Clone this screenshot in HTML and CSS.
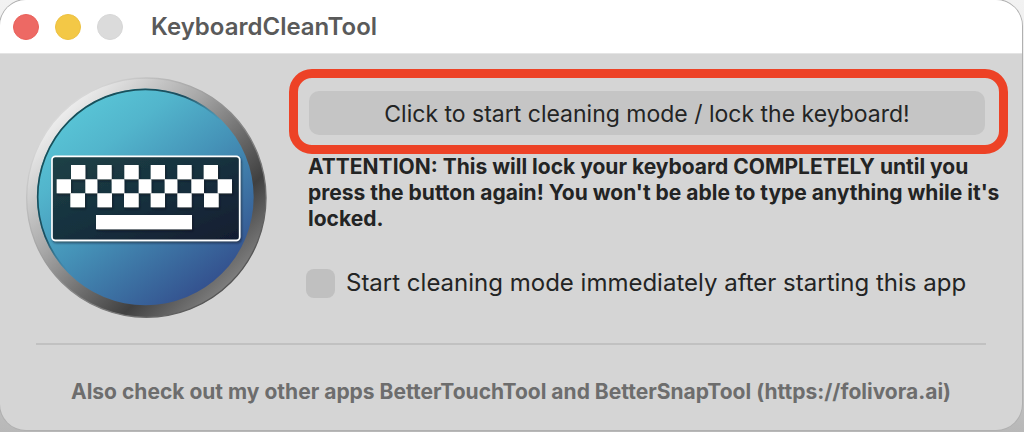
FILE: index.html
```html
<!DOCTYPE html>
<html lang="en">
<head>
<meta charset="utf-8">
<title>KeyboardCleanTool</title>
<link rel="stylesheet" href="styles.css">
</head>
<body>
<main class="window">
  <header class="titlebar">
    <div class="lights">
      <button class="light light-close" type="button" aria-label="Close"></button>
      <button class="light light-minimize" type="button" aria-label="Minimize"></button>
      <button class="light light-zoom" type="button" aria-label="Zoom" disabled></button>
    </div>
    <h1 class="title">KeyboardCleanTool</h1>
  </header>
  <div class="content">
    <svg class="logo" viewBox="33 35 723 723" aria-hidden="true">
      <defs>
        <linearGradient id="rim" x1="0.15" y1="0.15" x2="0.85" y2="0.85">
          <stop offset="0" stop-color="#ececec"/>
          <stop offset="0.12" stop-color="#d4d4d4"/>
          <stop offset="0.35" stop-color="#a8a8a8"/>
          <stop offset="0.6" stop-color="#6a6a6a"/>
          <stop offset="0.78" stop-color="#404040"/>
          <stop offset="1" stop-color="#7c7c7c"/>
        </linearGradient>
        <linearGradient id="edge" x1="0.15" y1="0.15" x2="0.85" y2="0.85">
          <stop offset="0" stop-color="#d8d8d8"/>
          <stop offset="0.5" stop-color="#8a8a8a"/>
          <stop offset="0.75" stop-color="#777"/>
          <stop offset="1" stop-color="#555"/>
        </linearGradient>
        <linearGradient id="face" x1="0.2" y1="0.1" x2="0.8" y2="0.9">
          <stop offset="0" stop-color="#58c3d5"/>
          <stop offset="0.2" stop-color="#52b5cc"/>
          <stop offset="0.5" stop-color="#4593b8"/>
          <stop offset="1" stop-color="#34528f"/>
        </linearGradient>
        <linearGradient id="lip" x1="0.15" y1="0.15" x2="0.85" y2="0.85">
          <stop offset="0" stop-color="#17505a"/>
          <stop offset="0.3" stop-color="#1e4f60"/>
          <stop offset="0.5" stop-color="#3a6c86" stop-opacity="0"/>
        </linearGradient>
        <linearGradient id="panel" x1="0" y1="0" x2="1" y2="1">
          <stop offset="0" stop-color="#1d4146"/>
          <stop offset="0.5" stop-color="#17303e"/>
          <stop offset="1" stop-color="#111d30"/>
        </linearGradient>
        <filter id="drop" x="-10%" y="-10%" width="120%" height="130%">
          <feDropShadow dx="3" dy="5" stdDeviation="3" flood-color="#081420" flood-opacity="0.6"/>
        </filter>
      </defs>
      <circle cx="394" cy="397" r="359" fill="url(#rim)" stroke="url(#edge)" stroke-width="4"/>
      <circle cx="391" cy="395" r="325" fill="url(#face)"/>
      <circle cx="391" cy="395" r="323" fill="none" stroke="url(#lip)" stroke-width="5"/>
      <rect x="111" y="273" width="563" height="252" rx="10" fill="url(#panel)" stroke="#fff" stroke-width="5" filter="url(#drop)"/>
      <g fill="#fff" filter="url(#drop)">
        <path d="M168 299h43v43h-43zM247 299h43v43h-43zM328 299h43v43h-43zM407 299h43v43h-43zM487 299h43v43h-43zM566 299h43v43h-43z"/>
        <path d="M125 342h43v42h-43zM211 342h36v42h-36zM290 342h38v42h-38zM371 342h38v42h-38zM449 342h38v42h-38zM529 342h38v42h-38zM608 342h43v42h-43z"/>
        <path d="M166 384h44v42h-44zM247 384h44v42h-44zM327 384h44v42h-44zM407 384h43v42h-43zM487 384h43v42h-43zM567 384h44v42h-44z"/>
        <path d="M243 449h288v43h-288z"/>
      </g>
    </svg>
    <section class="panel">
      <div class="highlight">
        <button class="start" type="button">Click to start cleaning mode / lock the keyboard!</button>
      </div>
      <p class="warning">ATTENTION: This will lock your keyboard COMPLETELY until you press the button again! You won't be able to type anything while it's locked.</p>
      <div class="option">
        <input class="check" type="checkbox" id="autostart">
        <label for="autostart">Start cleaning mode immediately after starting this app</label>
      </div>
    </section>
  </div>
  <footer class="footer">Also check out my other apps BetterTouchTool and BetterSnapTool (https://folivora.ai)</footer>
</main>
</body>
</html>
```
FILE: styles.css
```css
* {
  box-sizing: border-box;
}

body {
  margin: 0;
  padding: 0 2px 2px 0;
  background: linear-gradient(#f2f2f2, #e2e2e2 50%, #b8b8b8);
  font-family: Inter, "Liberation Sans", sans-serif;
  color: #232424;
}

.window {
  background: #d5d5d5;
  border-radius: 26px;
  overflow: hidden;
  box-shadow: 0 0 0 1px #b0b0b0;
}

.titlebar {
  display: flex;
  align-items: center;
  gap: 28px;
  height: 54px;
  padding: 0 13px;
  background: #fff;
  border-bottom: 1px solid #e4e4e4;
}

.lights {
  display: flex;
  gap: 16px;
}

.light {
  width: 26px;
  height: 26px;
  padding: 0;
  border: 1px solid;
  border-radius: 50%;
}

.light-close {
  background: #ed6964;
  border-color: #e9605a;
}

.light-minimize {
  background: #f3c846;
  border-color: #ecc040;
}

.light-zoom {
  background: #dbdbdb;
  border-color: #d6d6d6;
}

.title {
  margin: 0;
  font-size: 24px;
  line-height: 30px;
  font-weight: 600;
  color: #5a5a5a;
}

.content {
  display: flex;
  gap: 22px;
  padding: 15px 14px 0 26px;
}

.logo {
  flex: none;
  width: 241px;
  height: 241px;
  margin-top: 8px;
}

.panel {
  flex: 1;
  min-width: 0;
}

.highlight {
  padding: 13px 14px 10px 11px;
  border: 9px solid #ed4226;
  border-radius: 23px;
}

.start {
  display: block;
  width: 100%;
  height: 44px;
  padding: 2px 0 0;
  border: 0;
  border-radius: 10px;
  background: #c5c5c5;
  color: inherit;
  font: 400 23px/42px Inter, "Liberation Sans", sans-serif;
}

.warning {
  margin: 0 0 36px 19px;
  font-size: 21px;
  line-height: 26px;
  font-weight: 700;
}

.option {
  display: flex;
  align-items: center;
  gap: 11px;
  margin-left: 17px;
  font-size: 24px;
  line-height: 30px;
}

.check {
  appearance: none;
  flex: none;
  width: 29px;
  height: 29px;
  margin: 0;
  border-radius: 8px;
  background: #c0c0c0;
}

.footer {
  margin: 25px 36px 0;
  padding: 34px 0 25px;
  border-top: 2px solid #c1c1c1;
  font-size: 21px;
  line-height: 26px;
  font-weight: 700;
  text-align: center;
  color: #6d6d6d;
}
```
